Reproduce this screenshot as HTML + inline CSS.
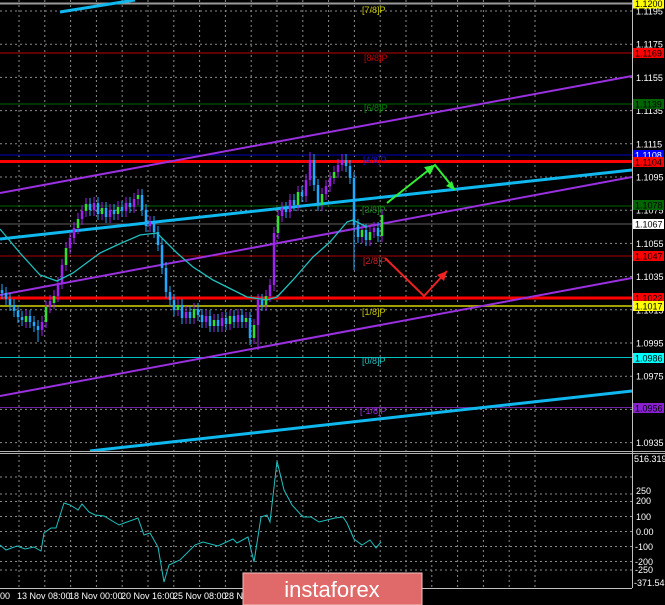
<!DOCTYPE html>
<html><head><meta charset="utf-8"><style>
html,body{margin:0;padding:0;background:#000;width:665px;height:605px;overflow:hidden}
svg{display:block}
text{font-family:"Liberation Sans",sans-serif}
</style></head><body>
<svg width="665" height="605" viewBox="0 0 665 605" xmlns="http://www.w3.org/2000/svg">
<rect width="665" height="605" fill="#000"/>
<path fill="none" stroke="#8a8a8a" stroke-dasharray="2,3" d="M535 0V588M509.2 0V588M483.4 0V588M457.6 0V588M431.8 0V588M406 0V588M380.2 0V588M354.4 0V588M328.6 0V588M302.8 0V588M277 0V588M251.2 0V588M225.4 0V588M199.6 0V588M173.8 0V588M148 0V588M122.2 0V588M96.4 0V588M70.6 0V588M44.8 0V588M19 0V588M0 11H632M0 44.2H632M0 77.4H632M0 110.6H632M0 143.8H632M0 177H632M0 210.2H632M0 243.4H632M0 276.6H632M0 309.8H632M0 343H632M0 376.2H632M0 409.4H632M0 442.6H632M0 477H632M0 494H632M0 501.5H632M0 516.5H632M0 531.5H632M0 546.5H632M0 561.5H632M0 570H632"/>
<line x1="0" y1="3.5" x2="632" y2="3.5" stroke="#9a9a9a" stroke-width="2"/>
<line x1="0" y1="53" x2="632" y2="53" stroke="#c00000" stroke-width="1"/>
<line x1="0" y1="104" x2="632" y2="104" stroke="#006400" stroke-width="1"/>
<line x1="0" y1="155" x2="632" y2="155" stroke="#0000c0" stroke-width="1"/>
<line x1="0" y1="161.5" x2="632" y2="161.5" stroke="#ff0000" stroke-width="3"/>
<line x1="0" y1="206" x2="632" y2="206" stroke="#006400" stroke-width="1"/>
<line x1="0" y1="224" x2="632" y2="224" stroke="#606060" stroke-width="1"/>
<line x1="0" y1="256" x2="632" y2="256" stroke="#b00000" stroke-width="1"/>
<line x1="0" y1="298" x2="632" y2="298" stroke="#ff0000" stroke-width="3"/>
<line x1="0" y1="306" x2="632" y2="306" stroke="#a0a000" stroke-width="2"/>
<line x1="0" y1="357.5" x2="632" y2="357.5" stroke="#00c0c0" stroke-width="1"/>
<line x1="0" y1="407.5" x2="632" y2="407.5" stroke="#7020a0" stroke-width="1"/>
<line x1="0" y1="193" x2="632" y2="76" stroke="#9a30e0" stroke-width="2"/>
<line x1="0" y1="295" x2="632" y2="177" stroke="#9a30e0" stroke-width="2"/>
<line x1="0" y1="396" x2="632" y2="278" stroke="#9a30e0" stroke-width="2"/>
<line x1="0" y1="239" x2="632" y2="170" stroke="#10b8f0" stroke-width="3"/>
<line x1="60" y1="12" x2="135" y2="0" stroke="#10b8f0" stroke-width="3"/>
<line x1="90" y1="451" x2="632" y2="391" stroke="#10b8f0" stroke-width="3"/>
<!-- candles -->
<path fill="none" stroke="#20a8ff" stroke-width="1" d="M2 284V299M6 287V305M10 293V311M14 299V317M18 305V323M22 311V326M30 310V328M34 316V332M38 320V342M90 198V216M98 197V220M106 202V223M114 204V220M122 201V217M130 197V213M142 189V216M146 204V232M154 216V238M158 226V251M162 238V274M166 262V298M170 286V306M174 294V316M182 299V324M190 306V324M198 303V321M202 309V328M210 310V332M218 314V332M226 312V330M234 310V328M242 309V328M250 312V345M262 294V311M286 202V218M294 194V211M302 186V202M314 154V191M318 179V211M346 154V172M350 160V184M354 172V270M358 219V243M366 224V246M378 222V242"/>
<path fill="none" stroke="#a020f0" stroke-width="1" d="M42 316V336M50 295V313M58 277V302M62 259V289M70 232V254M74 222V244M82 205V225M94 197V216M110 204V223M126 197V217M134 193V213M150 216V232M186 306V324M206 310V328M222 312V332M238 309V328M258 294V350M270 279V302M274 227V291M282 202V222M290 194V218M306 174V202M310 152V186M326 180V200M330 172V192M338 159V178M342 154V171M374 222V238M26 310V328M46 301V328M54 290V309M66 242V271M78 213V234M86 198V217M102 202V220M118 201V220M138 189V205M178 299V316M194 303V324M214 314V332M230 310V330M246 312V328M254 319V344M266 290V311M278 210V239M298 186V211M322 188V211M334 166V184M362 224V243M370 226V246M382 209V242"/>
<path fill="none" stroke="#20a8ff" stroke-width="2.5" d="M2 290V293M6 293V299M10 299V305M14 305V311M18 311V317M22 317V320M30 316V322M34 322V326M38 326V330M90 204V210M98 203V214M106 208V217M114 210V214M122 207V211M130 203V207M142 195V210M146 210V226M154 222V232M158 232V245M162 245V268M166 268V292M170 292V300M174 300V310M182 305V318M190 312V318M198 309V315M202 315V322M210 316V326M218 320V326M226 318V324M234 316V322M242 315V322M250 318V338M262 300V305M286 208V212M294 200V205M302 192V196M314 160V185M318 185V205M346 160V166M350 166V178M354 178V225M358 225V237M366 230V240M378 228V236"/>
<path fill="none" stroke="#a020f0" stroke-width="2.5" d="M42 322V330M50 301V307M58 283V296M62 265V283M70 238V248M74 228V238M82 211V219M94 203V210M110 210V217M126 203V211M134 199V207M150 222V226M186 312V318M206 316V322M222 318V326M238 315V322M258 300V325M270 285V296M274 233V285M282 208V216M290 200V212M306 180V196M310 160V180M326 186V194M330 178V186M338 165V172M342 160V165M374 228V232"/>
<path fill="none" stroke="#30e030" stroke-width="2.5" d="M26 316V322M46 307V322M54 296V303M66 248V265M78 219V228M86 204V211M102 208V214M118 207V214M138 195V199M178 305V310M194 309V318M214 320V326M230 316V324M246 318V322M254 325V338M266 296V305M278 216V233M298 192V205M322 194V205M334 172V178M362 230V237M370 232V240M382 215V236"/>
<polyline fill="none" stroke="#20c0c0" stroke-width="1.3" points="0,229 20,253 40,275 57,281 73,273 100,253 117,245 140,235 157,233 177,253 193,267 213,280 233,290 247,297 267,300 277,297 293,280 313,257 330,242 347,222 353,220 367,227"/>
<polyline fill="none" stroke="#33ee33" stroke-width="2" points="387,203 435,165 455,190"/>
<polygon fill="#33ee33" points="435,165 424,167 430,175"/>
<polygon fill="#33ee33" points="455,190 446,186 452,181"/>
<polyline fill="none" stroke="#ee2222" stroke-width="2" points="385,258 424,296 447,271"/>
<polygon fill="#ee2222" points="447,271 437,275 444,281"/>
<g font-size="9">
<text x="362" y="13" fill="#c8c800">[7/8]P</text>
<text x="364" y="61" fill="#c00000">[8/8]P</text>
<text x="364" y="111" fill="#008000">[6/8]P</text>
<text x="363" y="163" fill="#1818d0">[4/8]P</text>
<text x="362" y="213" fill="#208020">[3/8]P</text>
<text x="363" y="264" fill="#d02020">[2/8]P</text>
<text x="362" y="315" fill="#c8c800">[1/8]P</text>
<text x="362" y="364" fill="#20c0c0">[0/8]P</text>
<text x="360" y="414" fill="#9a30e0">[-1/8]P</text>
</g>
<rect x="0" y="451" width="665" height="3" fill="#b0b0b0"/>
<rect x="0" y="452" width="665" height="1" fill="#000"/>
<line x1="632.5" y1="0" x2="632.5" y2="588" stroke="#c0c0c0"/>
<line x1="0" y1="588.5" x2="632" y2="588.5" stroke="#c0c0c0"/>
<polyline fill="none" stroke="#20c0c0" stroke-width="1" points="0,545 6,550 17,546 25,549 34,547 41,551 44,533 51,528 56,528 64,503 70,505 75,508 78,510 82,504 89,512 95,515 104,516 119,525 127,522 138,518 144,535 150,533 158,547 164,582 169,565 180,560 195,545 203,542 218,546 233,539 237,543 248,537 254,562 261,517 267,515 270,522 277,461 284,490 292,505 303,517 311,517 319,522 335,518 343,517 347,523 354,539 362,545 370,540 376,548 381,542"/>
<g font-size="9" fill="#fff">
<text x="636" y="14.5">1.1195</text>
<text x="636" y="47.7">1.1175</text>
<text x="636" y="80.9">1.1155</text>
<text x="636" y="114.1">1.1135</text>
<text x="636" y="147.3">1.1115</text>
<text x="636" y="180.5">1.1095</text>
<text x="636" y="213.7">1.1075</text>
<text x="636" y="246.9">1.1055</text>
<text x="636" y="280.1">1.1035</text>
<text x="636" y="313.3">1.1015</text>
<text x="636" y="346.5">1.0995</text>
<text x="636" y="379.7">1.0975</text>
<text x="636" y="446.1">1.0935</text>
</g>
<g font-size="9">
<rect x="633" y="-1.5" width="31" height="10" fill="#ffff00"/><text x="635" y="7" fill="#000">1.1200</text>
<rect x="633" y="48" width="31" height="10" fill="#ff0000"/><text x="635" y="56.5" fill="#000">1.1169</text>
<rect x="633" y="99" width="31" height="10" fill="#006400"/><text x="635" y="107.5" fill="#000">1.1139</text>
<rect x="633" y="150" width="31" height="10" fill="#0000ff"/><text x="635" y="158.5" fill="#fff">1.1108</text>
<rect x="633" y="157" width="31" height="10" fill="#ff0000"/><text x="635" y="165.5" fill="#000">1.1104</text>
<rect x="633" y="200" width="31" height="10" fill="#006400"/><text x="635" y="208.5" fill="#000">1.1078</text>
<rect x="633" y="219" width="31" height="10" fill="#ffffff"/><text x="635" y="227.5" fill="#000">1.1067</text>
<rect x="633" y="251" width="31" height="10" fill="#ff0000"/><text x="635" y="259.5" fill="#000">1.1047</text>
<rect x="633" y="293" width="31" height="10" fill="#ff0000"/><text x="635" y="301.5" fill="#000">1.1022</text>
<rect x="633" y="301" width="31" height="10" fill="#ffff00"/><text x="635" y="309.5" fill="#000">1.1017</text>
<rect x="633" y="353" width="31" height="10" fill="#00ffff"/><text x="635" y="361.5" fill="#000">1.0986</text>
<rect x="633" y="403" width="31" height="10" fill="#8a20d0"/><text x="635" y="411.5" fill="#000">1.0956</text>
</g>
<g font-size="9" fill="#fff">
<text x="634" y="462">516.3192</text>
<text x="636" y="494">250</text>
<text x="636" y="504">200</text>
<text x="636" y="520">100</text>
<text x="636" y="535">0.00</text>
<text x="635" y="550">-100</text>
<text x="635" y="565">-200</text>
<text x="635" y="573">-250</text>
<text x="634" y="586">-371.5494</text>
<text x="0" y="599">00</text>
<text x="17" y="599">13 Nov 08:00</text>
<text x="69" y="599">18 Nov 00:00</text>
<text x="121" y="599">20 Nov 16:00</text>
<text x="173" y="599">25 Nov 08:00</text>
<text x="224" y="599">28 No</text>
</g>
<rect x="243" y="573" width="179" height="32" fill="#e06a6a" stroke="#f4c0c0" stroke-width="1"/>
<text x="332" y="597" font-size="22" fill="#fff" text-anchor="middle">instaforex</text>
</svg>
</body></html>
